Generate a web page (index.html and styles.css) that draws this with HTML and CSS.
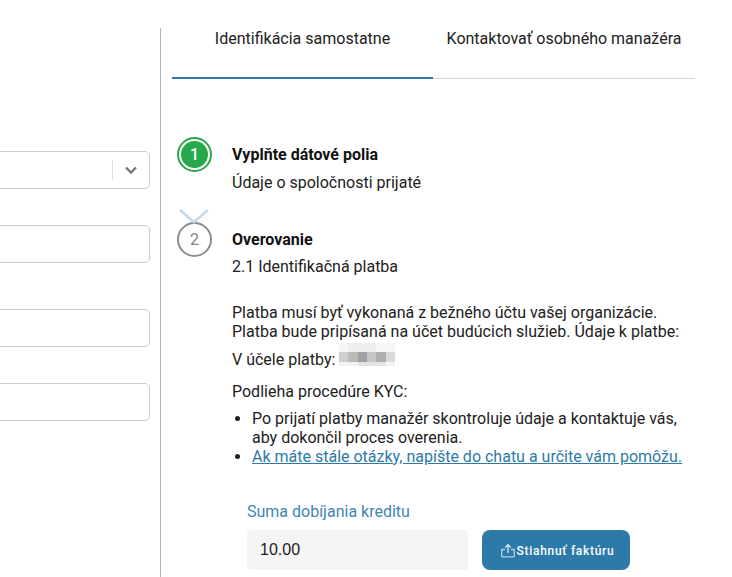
FILE: index.html
```html
<!DOCTYPE html>
<html lang="sk">
<head>
    <meta charset="UTF-8">
    <meta name="viewport" content="width=device-width, initial-scale=1.0">
    <title>Identifikácia</title>
    <link rel="stylesheet" href="styles.css">
</head>
<body>

    <div class="page">
        <div class="form-col">
            <div class="field field-select">
                <span class="select-sep"></span>
                <svg class="select-arrow" width="14" height="9" viewBox="0 0 14 9">
                    <path d="M2 1.5l5 5 5-5" fill="none" stroke="#777" stroke-width="2.4"/>
                </svg>
            </div>
            <div class="field field-second"></div>
            <div class="field field-third"></div>
            <div class="field field-fourth"></div>
        </div>

        <div class="main-col">
            <div class="tabs">
                <div class="tab active">Identifikácia samostatne</div>
                <div class="tab">Kontaktovať osobného manažéra</div>
            </div>

            <div class="step step-first">
                <div class="step-circle done"><span>1</span></div>
                <div>
                    <div class="step-title">Vyplňte dátové polia</div>
                    <div class="step-sub">Údaje o spoločnosti prijaté</div>
                </div>
            </div>

            <div class="step step-second">
                <div class="step-circle">2</div>
                <svg class="step-chevron" width="30" height="15" viewBox="0 0 30 15">
                    <path d="M1 1l14 12L29 1" fill="none" stroke="#c5d9e8" stroke-width="2.6"/>
                </svg>
                <div>
                    <div class="step-title">Overovanie</div>
                    <div class="step-sub">2.1 Identifikačná platba</div>
                </div>
            </div>

            <div class="details">
                <p class="intro">Platba musí byť vykonaná z bežného účtu vašej organizácie.<br>Platba bude pripísaná na účet budúcich služieb. Údaje k platbe:</p>
                <div class="purpose">
                    <span>V účele platby:</span>
                    <svg class="blurred" width="56" height="25" viewBox="0 0 6 2.5" shape-rendering="crispEdges">
                        <rect x="0" y="0" width="6" height="1" fill="#f6f6f6"/>
                        <rect x="1" y="0" width="3" height="1" fill="#eeeeee"/>
                        <rect x="0" y="1" width="1" height="1" fill="#cfcfcf"/>
                        <rect x="1" y="1" width="1" height="1" fill="#bdb9b7"/>
                        <rect x="2" y="1" width="1" height="1" fill="#9fa1a6"/>
                        <rect x="3" y="1" width="1" height="1" fill="#c6c6c6"/>
                        <rect x="4" y="1" width="1" height="1" fill="#aeb0b2"/>
                        <rect x="5" y="1" width="1" height="1" fill="#d8dadc"/>
                        <rect x="0" y="2" width="6" height="0.5" fill="#f2f2f2"/>
                        <rect x="2" y="2" width="3" height="0.5" fill="#e3e3e3"/>
                    </svg>
                </div>
                <p class="kyc">Podlieha procedúre KYC:</p>
                <ul class="kyc-list">
                    <li>Po prijatí platby manažér skontroluje údaje a kontaktuje vás, aby dokončil proces overenia.</li>
                    <li><a href="#">Ak máte stále otázky, napíšte do chatu a určite vám pomôžu.</a></li>
                </ul>
            </div>

            <div class="topup">
                <label class="topup-label" for="amount">Suma dobíjania kreditu</label>
                <div class="topup-row">
                    <input class="topup-input" id="amount" type="text" value="10.00">
                    <button class="topup-btn" type="button">
                        <svg width="14" height="15" viewBox="0 0 14 15">
                            <path d="M7 10V2M4.2 4.6L7 1.7l2.8 2.9" fill="none" stroke="#dfeaf2" stroke-width="1.3"/>
                            <path d="M4 6.5H1.2a.5.5 0 0 0-.5.5v6.3a.5.5 0 0 0 .5.5h11.6a.5.5 0 0 0 .5-.5V7a.5.5 0 0 0-.5-.5H10" fill="none" stroke="#b5cfe0" stroke-width="1.3"/>
                        </svg>
                        Stiahnuť faktúru
                    </button>
                </div>
            </div>
        </div>
    </div>

</body>
</html>
```

FILE: styles.css
```css
html, body {
    margin: 0;
    padding: 0;
    height: 100%;
    overflow: hidden;
    background-color: white;
}
body {
    font-family: Roboto, sans-serif;
    font-size: 16px;
    color: #212121;
}
.page {
    display: flex;
    height: 549px;
    margin-top: 28px;
}
.form-col {
    width: 160px;
    flex-shrink: 0;
    border-right: 1px solid #b5b5b5;
    padding-top: 123px;
    overflow: hidden;
}
.field {
    box-sizing: border-box;
    width: 170px;
    margin-left: -20px;
    height: 38px;
    border: 1px solid #cccccc;
    border-radius: 5px;
}
.field-select {
    display: flex;
    justify-content: flex-end;
    align-items: center;
}
.select-sep {
    width: 1px;
    height: 20px;
    background-color: #dddddd;
    margin-right: 11px;
}
.select-arrow {
    margin-right: 11px;
}
.field-second {
    margin-top: 36px;
}
.field-third {
    margin-top: 46px;
}
.field-fourth {
    margin-top: 36px;
}
.main-col {
    flex: 1;
    min-width: 0;
    padding-left: 11px;
}
.tabs {
    display: flex;
    width: 523px;
    height: 51px;
    box-sizing: border-box;
    border-bottom: 1px solid #d5d5d5;
}
.tab {
    flex: 1;
    padding-top: 1px;
    text-align: center;
    line-height: 20px;
    color: #212121;
}
.tab.active {
    flex: none;
    width: 261px;
    height: 51px;
    box-sizing: border-box;
    border-bottom: 2px solid #2d7aa9;
}
.step {
    position: relative;
    display: flex;
    align-items: flex-start;
    margin-left: 5px;
    line-height: 20px;
}
.step-first {
    margin-top: 66px;
}
.step-second {
    margin-top: 37px;
}
.step-circle {
    box-sizing: border-box;
    width: 35px;
    height: 35px;
    margin-top: -8px;
    margin-right: 20px;
    border: 2px solid #8c8c8c;
    border-radius: 50%;
    display: flex;
    justify-content: center;
    align-items: center;
    color: #808080;
    font-size: 16px;
    flex-shrink: 0;
}
.step-circle.done {
    border-color: #27a84a;
    padding: 2px;
}
.step-circle.done span {
    width: 100%;
    height: 100%;
    border-radius: 50%;
    background-color: #27a84a;
    color: white;
    font-weight: 500;
    display: flex;
    justify-content: center;
    align-items: center;
}
.step-chevron {
    position: absolute;
    left: 2px;
    top: -21px;
}
.step-title {
    font-weight: 700;
    color: #111111;
    margin-bottom: 8px;
}
.step-second .step-title {
    margin-bottom: 7px;
}
.details {
    margin-left: 60px;
    margin-top: 26px;
    line-height: 19px;
}
.intro {
    margin: 0;
}
.purpose {
    display: flex;
    align-items: center;
    margin-top: 3px;
    height: 30px;
}
.blurred {
    align-self: flex-start;
    margin-top: -2px;
    margin-left: 4px;
}
.kyc {
    margin: 8px 0 0;
}
.kyc-list {
    margin: 8px 0 0;
    padding-left: 20px;
    width: 445px;
}
.kyc-list a {
    color: #2d7aa9;
}
.topup {
    margin-left: 75px;
    margin-top: 36px;
}
.topup-label {
    display: block;
    color: #3e86b2;
    line-height: 20px;
}
.topup-row {
    display: flex;
    margin-top: 8px;
}
.topup-input {
    box-sizing: border-box;
    width: 221px;
    height: 40px;
    padding: 0 13px;
    border: none;
    border-radius: 4px;
    background-color: #f5f5f5;
    font-family: "Liberation Sans", sans-serif;
    font-size: 16px;
    color: #212121;
}
.topup-btn {
    width: 148px;
    height: 40px;
    margin-left: 14px;
    padding: 1px 0 0 3px;
    border: none;
    border-radius: 8px;
    background-color: #2d7aa9;
    color: white;
    font-family: Roboto, sans-serif;
    font-size: 12px;
    font-weight: 500;
    letter-spacing: 0.7px;
    display: flex;
    justify-content: center;
    align-items: center;
    gap: 2px;
}
```
